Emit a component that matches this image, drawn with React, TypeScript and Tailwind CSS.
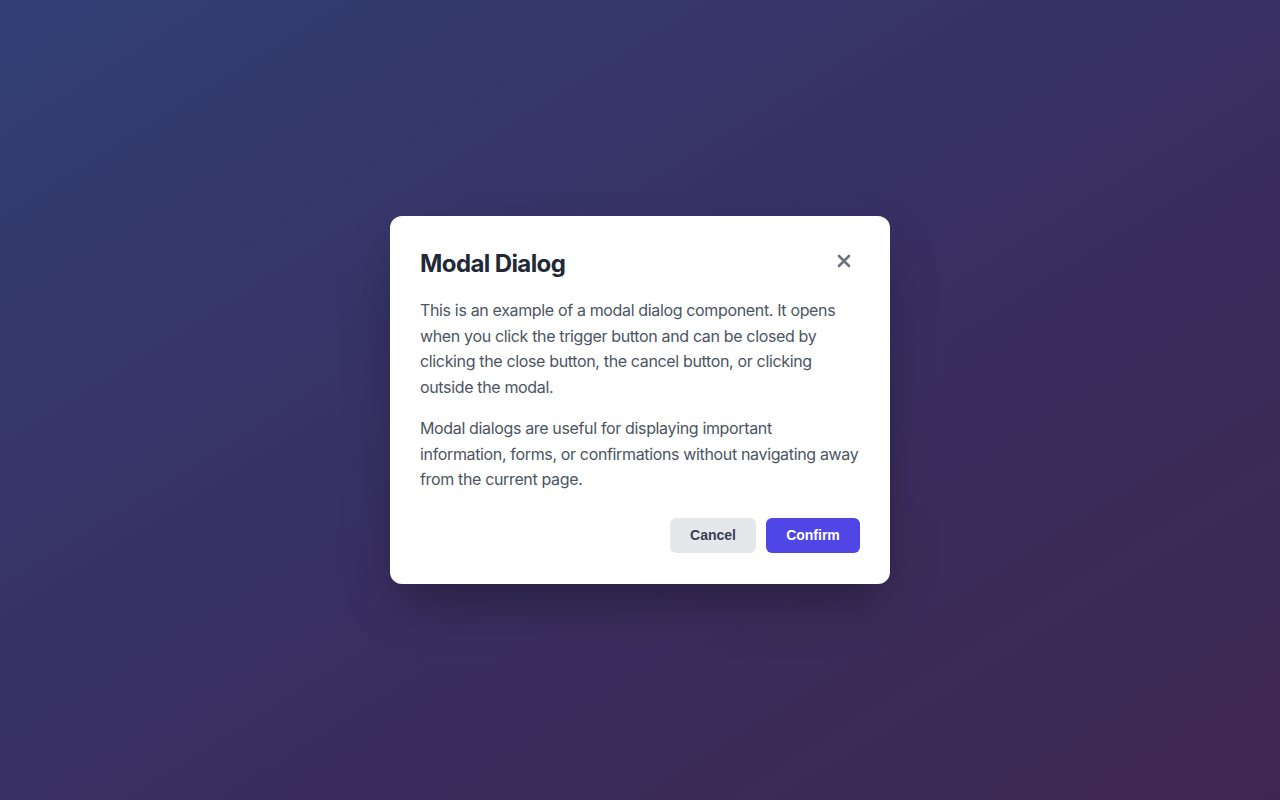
import React from "react";

export default function App() {
  return (
    <div className="w-full h-[800px] flex items-center justify-center bg-gradient-to-br from-[#313f74] via-[#382f62] to-[#3e2650]" style={{ fontFamily: "Inter, 'Noto Sans', sans-serif" }}>
      <div className="w-[500px] bg-white rounded-xl p-[30px] pb-[31px] shadow-[0_25px_50px_-12px_rgba(0,0,0,0.35)]">
        <div className="flex items-start justify-between h-[32px] mt-[2px] mb-[18px]">
          <h2 className="text-[24px] leading-[32px] font-bold text-[#1f2937] tracking-[-0.6px]">Modal Dialog</h2>
          <button className="w-[24px] h-[24px] flex items-center justify-center text-[#6b7280] mr-[4px] mt-[1px]">
            <svg width="14" height="14" viewBox="0 0 14 14" fill="none">
              <path d="M2 2L12 12M12 2L2 12" stroke="currentColor" strokeWidth="2.6" strokeLinecap="round" />
            </svg>
          </button>
        </div>
        <p className="text-[16px] leading-[25.6px] text-[#4b5563] mb-4 tracking-[-0.35px]">
          This is an example of a modal dialog component. It opens when you click the trigger button and can be closed by clicking the close button, the cancel button, or clicking outside the modal.
        </p>
        <p className="text-[16px] leading-[25.6px] text-[#4b5563] tracking-[-0.35px]">
          Modal dialogs are useful for displaying important information, forms, or confirmations without navigating away from the current page.
        </p>
        <div className="flex justify-end gap-[10px] mt-[25px]" style={{ fontFamily: "'Liberation Sans', Arial, sans-serif" }}>
          <button className="h-[35px] w-[86px] rounded-md bg-[#e5e7eb] text-[#374151] text-[14px] font-bold">Cancel</button>
          <button className="h-[35px] w-[94px] rounded-md bg-[#4f46e5] text-white text-[14px] font-bold">Confirm</button>
        </div>
      </div>
    </div>
  );
}
